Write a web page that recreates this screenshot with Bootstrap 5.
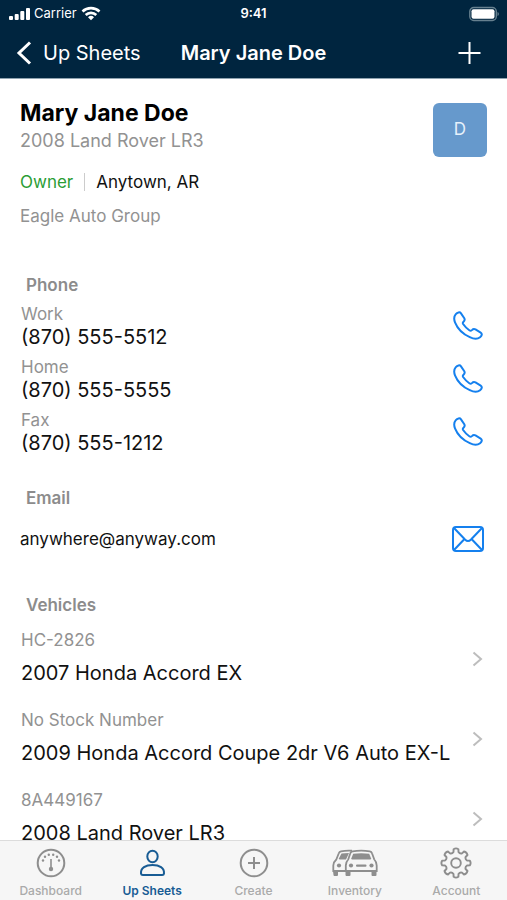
<!DOCTYPE html>
<html lang="en">
<head>
<meta charset="utf-8">
<meta name="viewport" content="width=device-width, initial-scale=1">
<title>Mary Jane Doe</title>
<link href="https://cdn.jsdelivr.net/npm/bootstrap@5.3.0/dist/css/bootstrap.min.css" rel="stylesheet">
<style>
body { font-family: Inter, "Liberation Sans", sans-serif; color: #111; background: #fff; }
a, button { text-decoration: none; color: inherit; }
svg { display: block; flex: none; }
.triple { display: grid; grid-template-columns: 1fr auto 1fr; align-items: center; }
.top-area { background: #00253f; color: #fff; border-bottom: 1px solid #8fa3b0; }
.status-row { height: 27px; font-size: 13px; padding: 0 8px; }
.title-row { height: 51px; font-size: 20px; padding: 0 16px; }
.page-title { font-size: 20px; font-weight: 600; margin: 0; }
.scroller { min-height: 0; overflow-y: auto; scrollbar-width: none; padding: 20px 20px 0; }
.scroller::-webkit-scrollbar { display: none; }
.person { font-size: 23px; line-height: 28px; font-weight: 700; color: #000; }
.person-sub { font-size: 18px; line-height: 28px; }
.dim { color: #929292; }
.line { font-size: 17px; line-height: 24px; }
.caption-line { font-size: 17px; line-height: 22px; }
.main-line { font-size: 20px; line-height: 24px; }
.owner { color: #2a9d35; }
.divider { width: 1px; height: 18px; background: #ccc; margin: 0 11px; }
.initial { width: 54px; height: 54px; border-radius: 6px; background: #6699cc; color: #e6f1fb; font-size: 17px; margin-top: 4px; }
.heading { font-size: 17px; line-height: 24px; font-weight: 600; color: #8c8c8c; margin: 0; padding-left: 6px; }
.phone-heading { margin-bottom: 6px; }
.entry { height: 53px; padding: 0 4px 7px 1px; }
.action { color: #1580ee; }
.email-link { margin-right: 3px; }
.vehicle { height: 80px; padding: 4px 4px 0 1px; }
.vehicle-name { margin-top: 10px; }
.vehicle-arrow { margin-top: 22px; }
.tabs { background: #f6f6f6; border-top: 1px solid #dcdcdc; height: 60px; flex: none; }
.tab-link { flex: 1 1 0; font-size: 12px; line-height: 16px; font-weight: 500; color: #aaa; padding-top: 6px; gap: 4px; }
.tab-link svg { color: #8e8e8e; height: 32px; }
.tab-link.current, .tab-link.current svg { color: #185c94; }
.tab-link.current { font-weight: 600; }
.mt-owner { margin-top: 15px; }
.mt-group { margin-top: 10px; }
.mt-phone { margin-top: 45px; }
.mt-email { margin-top: 24px; }
.mt-vehicles { margin-top: 41px; }
</style>
<script src="https://cdn.jsdelivr.net/npm/bootstrap@5.3.0/dist/js/bootstrap.bundle.min.js" defer></script>
</head>
<body>
<svg class="d-none" aria-hidden="true">
  <symbol id="phone" viewBox="0 0 30 30"><path d="M2.800 3.200C4.300 1.300 6.800.6 8 2.300l3.300 4.900c.8 1.300.4 2.300-.8 3.500-.9.900-.9 1.500-.4 2.300 1.800 2.600 3.900 4.700 6.500 6.500.8.5 1.500.4 2.300-.4 1.200-1.300 2.200-1.500 3.600-.7l5.200 3.200c1.700 1.100 1.300 3.100-.6 4.600-2.400 1.900-6.200 2-10.300-.1C9.500 22.800 4.400 17.300 2 11.300.7 8 1 5.300 2.800 3.200Z" fill="none" stroke="currentColor" stroke-width="2" stroke-linejoin="round"/></symbol>
  <symbol id="chevron" viewBox="0 0 12 16"><path d="m2.500 1.500 7.500 6.500-7.500 6.500" fill="none" stroke="#bdbdbd" stroke-width="2"/></symbol>
</svg>
<div class="vh-100 d-flex flex-column">
  <header class="top-area flex-shrink-0">
    <div class="status-row triple">
      <div class="d-flex align-items-center gap-1">
        <svg width="22" height="14" viewBox="0 0 22 14" fill="#fff"><rect x="1" y="9" width="4" height="4" rx="1"/><rect x="6.700" y="7" width="4" height="6" rx="1"/><rect x="12.300" y="4" width="4" height="9" rx="1"/><rect x="18" y="1" width="4" height="12" rx="1"/></svg>
        <span>Carrier</span>
        <svg width="20" height="15" viewBox="0 0 20 15" fill="none" stroke="#fff" stroke-width="2.600"><path d="M1.500 5.500a12.300 12.300 0 0 1 17 0M4.700 9a7.600 7.600 0 0 1 10.600 0"/><path d="M7 11.300a4.300 4.300 0 0 1 6 0l-3 3Z" fill="#fff" stroke="none"/></svg>
      </div>
      <span class="fw-semibold">9:41</span>
      <svg class="ms-auto" width="30" height="16" viewBox="0 0 30 16"><rect x=".8" y="1.500" width="26.500" height="13" rx="4" fill="none" stroke="#66808f" stroke-width="1.400"/><rect x="2.500" y="3.200" width="23" height="9.600" rx="2" fill="#fff"/><path d="M28.500 6q1.400.5 1.400 2t-1.400 2Z" fill="#66808f"/></svg>
    </div>
    <nav class="title-row triple" aria-label="Page">
      <a href="#" class="d-flex align-items-center"><svg class="me-2" width="19" height="26" viewBox="0 0 19 26"><path d="M14 2.500 3 13l11 10.500" fill="none" stroke="#fff" stroke-width="3"/></svg><span>Up Sheets</span></a>
      <h1 class="page-title">Mary Jane Doe</h1>
      <button type="button" class="border-0 bg-transparent p-0 ms-auto me-2" aria-label="Add"><svg width="28" height="24" viewBox="0 0 28 24"><path d="M3.500 12h22M14.500 1v22" stroke="#fff" stroke-width="2"/></svg></button>
    </nav>
  </header>

  <main class="scroller flex-grow-1">
    <section class="d-flex justify-content-between align-items-start">
      <div>
        <div class="person">Mary Jane Doe</div>
        <div class="person-sub dim">2008 Land Rover LR3</div>
        <div class="line mt-owner d-flex align-items-center"><span class="owner">Owner</span><span class="divider"></span><span>Anytown, AR</span></div>
        <div class="line mt-group dim">Eagle Auto Group</div>
      </div>
      <div class="initial d-flex align-items-center justify-content-center">D</div>
    </section>

    <section class="mt-phone">
      <h2 class="heading phone-heading">Phone</h2>
      <div class="entry d-flex justify-content-between align-items-center"><div><div class="caption-line dim">Work</div><div class="main-line">(870) 555-5512</div></div><a href="tel:8705555512" class="action" aria-label="Call work"><svg width="30" height="30"><use href="#phone"/></svg></a></div>
      <div class="entry d-flex justify-content-between align-items-center"><div><div class="caption-line dim">Home</div><div class="main-line">(870) 555-5555</div></div><a href="tel:8705555555" class="action" aria-label="Call home"><svg width="30" height="30"><use href="#phone"/></svg></a></div>
      <div class="entry d-flex justify-content-between align-items-center"><div><div class="caption-line dim">Fax</div><div class="main-line">(870) 555-1212</div></div><a href="tel:8705551212" class="action" aria-label="Call fax"><svg width="30" height="30"><use href="#phone"/></svg></a></div>
    </section>

    <section class="mt-email">
      <h2 class="heading mb-3">Email</h2>
      <div class="line d-flex justify-content-between align-items-center"><span>anywhere@anyway.com</span><a href="mailto:anywhere@anyway.com" class="action email-link" aria-label="Send email"><svg width="32" height="26" viewBox="0 0 32 26" fill="none" stroke="currentColor" stroke-width="2"><rect x="1" y="1" width="30" height="24" rx="3"/><path d="m2 2 11 11.500q3 3 6 0L30 2M2 24l10.500-11M30 24 19.500 13"/></svg></a></div>
    </section>

    <section class="mt-vehicles">
      <h2 class="heading mb-2">Vehicles</h2>
      <a href="#" class="vehicle d-flex justify-content-between align-items-start"><span><span class="caption-line dim d-block">HC-2826</span><span class="main-line vehicle-name d-block">2007 Honda Accord EX</span></span><svg class="vehicle-arrow" width="12" height="16"><use href="#chevron"/></svg></a>
      <a href="#" class="vehicle d-flex justify-content-between align-items-start"><span><span class="caption-line dim d-block">No Stock Number</span><span class="main-line vehicle-name d-block">2009 Honda Accord Coupe 2dr V6 Auto EX-L</span></span><svg class="vehicle-arrow" width="12" height="16"><use href="#chevron"/></svg></a>
      <a href="#" class="vehicle d-flex justify-content-between align-items-start"><span><span class="caption-line dim d-block">8A449167</span><span class="main-line vehicle-name d-block">2008 Land Rover LR3</span></span><svg class="vehicle-arrow" width="12" height="16"><use href="#chevron"/></svg></a>
    </section>
  </main>

  <nav class="tabs d-flex" aria-label="Main">
    <a href="#" class="tab-link d-flex flex-column align-items-center"><svg width="32" viewBox="0 0 32 32" fill="none" stroke="currentColor"><circle cx="16" cy="16" r="13.300" stroke-width="2"/><path d="M16 12v9" stroke-width="1.600"/><circle cx="16" cy="22" r="2.200" fill="currentColor" stroke="none"/><g fill="currentColor" stroke="none"><circle cx="8" cy="13.500" r="1.200"/><circle cx="10" cy="9.800" r="1.200"/><circle cx="13.800" cy="7.800" r="1.200"/><circle cx="18.200" cy="7.800" r="1.200"/><circle cx="22" cy="9.800" r="1.200"/><circle cx="24" cy="13.500" r="1.200"/></g></svg>Dashboard</a>
    <a href="#" class="tab-link current d-flex flex-column align-items-center" aria-current="page"><svg width="32" viewBox="0 0 32 32" fill="none" stroke="currentColor" stroke-width="2"><ellipse cx="16.500" cy="9.500" rx="5.200" ry="5.800"/><path d="M5 26.500c-.4-5.500 4.500-8.500 11.500-8.500s11.900 3 11.500 8.500q-.2 1.500-1.800 1.500H6.800q-1.600 0-1.800-1.500Z"/></svg>Up Sheets</a>
    <a href="#" class="tab-link d-flex flex-column align-items-center"><svg width="32" viewBox="0 0 32 32" fill="none" stroke="currentColor" stroke-width="2"><circle cx="16" cy="16" r="13.300"/><path d="M16 10v12M10 16h12"/></svg>Create</a>
    <a href="#" class="tab-link d-flex flex-column align-items-center"><svg width="46" viewBox="0 0 46 32" fill="none" stroke="currentColor" stroke-width="1.800"><path d="M1 24h5v4q0 1-1 1H2.500q-1 0-1-1ZM13.500 24h5v4q0 1-1 1h-3q-1 0-1-1ZM39.500 24h5v4q0 1-1 1h-3q-1 0-1-1Z" fill="currentColor" stroke="none"/><path d="M20 3.700Q14 3.300 9 4.300 7.400 4.600 6.800 6.300L4.300 12.500Q1.500 15 1.300 18.500V24H15"/><path d="M9.500 6.500q3-.6 7.500-.6L14 12.500H8q-1.400 0-1-1.300Z" fill="currentColor" stroke="none"/><circle cx="7" cy="18.500" r="2.100" fill="currentColor" stroke="none"/><path d="M20.500 4.300q8.700-1.500 17.300 0Q39.500 4.600 40 6.300L42.300 12.500Q44.700 15 44.700 18.500V24H13.800V18.500Q13.800 15 16.200 12.500L18.300 6.300Q18.800 4.600 20.500 4.300Z" fill="#f6f6f6"/><path d="M21.200 6.800q8-1.300 16 0l1.800 4.400q.4 1.300-1 1.300H20.400q-1.400 0-1-1.300Z" fill="currentColor" stroke="none"/><g fill="currentColor" stroke="none"><circle cx="19" cy="18.500" r="2.100"/><circle cx="39.500" cy="18.500" r="2.100"/><rect x="24" y="17.500" width="10.500" height="2.200" rx="1"/></g></svg>Inventory</a>
    <a href="#" class="tab-link d-flex flex-column align-items-center"><svg width="32" viewBox="0 0 32 32" fill="none" stroke="currentColor" stroke-width="1.900" stroke-linejoin="round"><circle cx="16" cy="16" r="4.800"/><path d="M13.600 2.200Q16 .6 18.400 2.200L18.500 5Q19.800 7 22 6.400L24 4.500Q26.900 5.100 27.500 8L25.600 10Q25 12.200 27 13.500L29.800 13.600Q31.400 16 29.800 18.400L27 18.500Q25 19.800 25.600 22L27.500 24Q26.900 26.900 24 27.500L22 25.600Q19.800 25 18.500 27L18.400 29.800Q16 31.400 13.600 29.800L13.500 27Q12.200 25 10 25.600L8 27.500Q5.100 26.900 4.500 24L6.400 22Q7 19.800 5 18.500L2.200 18.400Q.6 16 2.200 13.600L5 13.500Q7 12.200 6.400 10L4.500 8Q5.100 5.100 8 4.500L10 6.400Q12.200 7 13.500 5Z"/></svg>Account</a>
  </nav>
</div>
</body>
</html>
